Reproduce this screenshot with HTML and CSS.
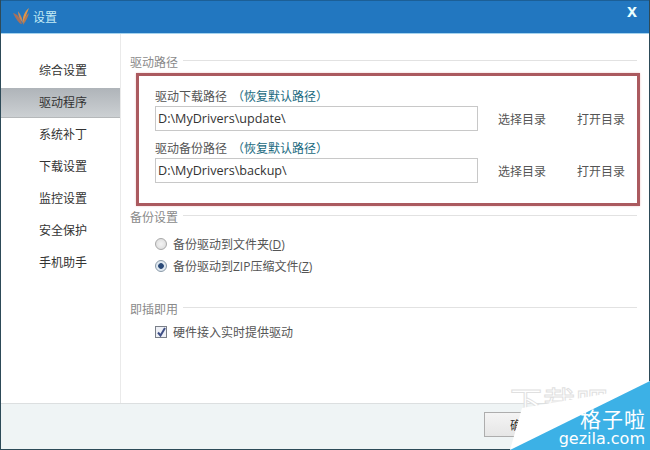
FILE: index.html
```html
<!DOCTYPE html>
<html lang="zh-CN">
<head>
<meta charset="utf-8">
<title>设置</title>
<link rel="stylesheet" href="styles.css">
</head>
<body>
<div class="window">
  <header class="titlebar">
    <svg class="logo" width="20" height="20" viewBox="0 0 20 20"><path d="M1 6 C5 7 8 10 10 17 C7 17 4 12 1 6Z" fill="#a8705a"/><path d="M6 4 C8 7 10 10 11 16 C8 13 6 9 6 4Z" fill="#c98a5a"/><path d="M17 1 C15 6 13 11 11 17 C10 11 12 5 17 1Z" fill="#e0954a"/><path d="M17 6 C16 10 14 14 11 18 C11 13 13 9 17 6Z" fill="#b87a50"/></svg>
    <span class="title">设置</span>
    <span class="close">x</span>
  </header>
  <div class="main">
    <nav class="sidebar">
      <div class="nav-item">综合设置</div>
      <div class="nav-item active">驱动程序</div>
      <div class="nav-item">系统补丁</div>
      <div class="nav-item">下载设置</div>
      <div class="nav-item">监控设置</div>
      <div class="nav-item">安全保护</div>
      <div class="nav-item">手机助手</div>
    </nav>
    <section class="content">
      <div class="group-title"><span>驱动路径</span><i></i></div>
      <div class="redbox">
        <div class="path-label">驱动下载路径<a>（恢复默认路径）</a></div>
        <div class="path-row">
          <div class="input">D:\MyDrivers\update\</div>
          <span class="act first">选择目录</span>
          <span class="act">打开目录</span>
        </div>
        <div class="path-label second">驱动备份路径<a>（恢复默认路径）</a></div>
        <div class="path-row">
          <div class="input">D:\MyDrivers\backup\</div>
          <span class="act first">选择目录</span>
          <span class="act">打开目录</span>
        </div>
      </div>
      <div class="group-title backup"><span>备份设置</span><i></i></div>
      <div class="option o1"><span class="radio"></span>备份驱动到文件夹(<u>D</u>)</div>
      <div class="option o2"><span class="radio on"></span>备份驱动到ZIP压缩文件(<u>Z</u>)</div>
      <div class="group-title plug"><span>即插即用</span><i></i></div>
      <div class="option o3">
        <span class="check"><svg width="9" height="10" viewBox="0 0 9 10"><path d="M1 5.5 L3.5 8.5 L8 1" fill="none" stroke="#3f4f86" stroke-width="2"/></svg></span>硬件接入实时提供驱动
      </div>
    </section>
  </div>
  <footer class="footer"><button class="btn">确定</button></footer>
</div>
<div class="ghost">下载吧</div>
<svg class="corner" width="140" height="69" viewBox="0 0 140 69">
  <polygon points="0,69 12,27 95,13 140,0 140,69" fill="#fff"/>
  <polygon points="0,69 140,0 140,69" fill="#3cb1e6"/>
</svg>
<div class="mark"><div class="mark-cn">格子啦</div><div class="mark-en">gezila.com</div></div>
</body>
</html>
```
FILE: styles.css
```css
* { box-sizing: border-box; }
html, body { margin: 0; padding: 0; width: 650px; height: 450px; overflow: hidden; background: #fff; }
body { font-family: "Open Sans", "Noto Sans CJK SC", sans-serif; font-size: 12px; color: #444; position: relative; }
.window { width: 650px; height: 450px; display: flex; flex-direction: column; border-left: 1px solid #2d4a58; border-right: 1px solid #2d4a58; border-bottom: 1px solid #2d4a58; }
.titlebar { height: 34px; flex: none; background: #2277c0; border-top: 1px solid #1c5f96; border-bottom: 1px solid #a5d3ee; display: flex; align-items: center; padding: 0 12px 0 11px; }
.logo { flex: none; filter: blur(0.4px); }
.title { margin-left: 1px; color: #c4ecf5; font-size: 12px; }
.close { margin-left: auto; margin-top: -13px; color: #eaffff; font: bold 18px/18px "Liberation Sans", sans-serif; }
.main { flex: 1; display: flex; min-height: 0; }
.sidebar { width: 120px; flex: none; border-right: 1px solid #eaeaea; padding-top: 21px; }
.nav-item { height: 32px; line-height: 32px; padding-left: 38px; color: #333; }
.nav-item.active { height: 30px; line-height: 30px; margin: 1px 0; background: linear-gradient(#afb4b9, #ccd0d3); border-bottom: 1px solid #b5b8ba; }
.content { flex: 1; padding: 20px 10px 0 9px; min-width: 0; }
.group-title { display: flex; align-items: center; height: 16px; color: #8a8a8a; margin-right: 2px; }
.group-title i { flex: 1; height: 1px; background: #e2e2e2; margin-left: 5px; margin-top: -3px; }
.redbox { width: 504px; height: 133px; margin: 3px 0 0 6px; border: 3px solid #ab5a5f; padding: 12px 0 0 16px; box-shadow: 0 0 2px #f0c8c8; }
.path-label { height: 18px; line-height: 18px; color: #555; }
.path-label a { color: #1a6a80; margin-left: 5px; }
.path-label.second { margin-top: 9px; }
.path-row { display: flex; align-items: center; }
.input { width: 323px; height: 25px; line-height: 23px; border: 1px solid #c8c8c8; padding-left: 2px; color: #333; font-size: 12.6px; }
.act { color: #555; margin-left: 31px; }
.act.first { margin-left: 20px; }
.backup { margin-top: 3px; }
.option { display: flex; align-items: center; height: 22px; padding-left: 25px; color: #555; }
.o1 { margin-top: 8px; }
.plug { margin-top: 24px; }
.o3 { margin-top: 4px; }
.radio { width: 12px; height: 12px; border-radius: 50%; border: 1px solid #a8a8a8; background: radial-gradient(#f4f4f4, #d8d8d8); margin-right: 6px; }
.radio.on { background: radial-gradient(#2a4a78 35%, #dfe8f0 45%); border-color: #8a9aa8; }
.check { width: 12px; height: 12px; border: 1px solid #7a7f88; background: #eef0f6; margin-right: 6px; display: flex; align-items: center; justify-content: center; }
.footer { height: 46px; flex: none; background: #eff4f5; border-top: 1px solid #dcdfe0; display: flex; align-items: flex-start; padding: 8px 0 0 483px; }
.btn { width: 76px; height: 25px; border: 1px solid #adadad; background: linear-gradient(#f4f4f4, #e6e6e6); font: 12px "Noto Sans CJK SC", sans-serif; color: #333; padding: 0; }
.ghost { position: absolute; left: 510px; top: 381px; font: 32px/40px "Noto Sans CJK SC", sans-serif; color: #fff; -webkit-text-stroke: 1px #e0e0e0; letter-spacing: 1px; }
.corner { position: absolute; left: 510px; top: 381px; }
.mark { position: absolute; right: 5px; top: 405px; color: #fff; text-align: right; }
.mark-cn { font: 21px/26px "Noto Sans CJK SC", sans-serif; letter-spacing: 1px; margin-right: -1px; }
.mark-en { font: 16px/16px "DejaVu Sans", sans-serif; }
```
